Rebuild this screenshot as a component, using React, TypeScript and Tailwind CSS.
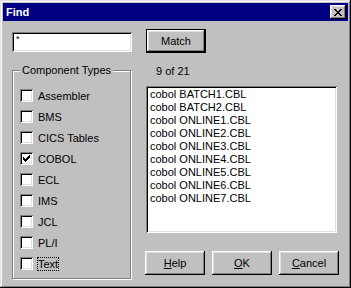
import React from 'react';

const font = "font-['Liberation_Sans',Arial,sans-serif]";

const raised =
  'shadow-[inset_-1px_-1px_#000,inset_1px_1px_#fff,inset_-2px_-2px_#808080,inset_2px_2px_#dfdfdf]';
const sunken =
  'shadow-[inset_1px_1px_#808080,inset_-1px_-1px_#fff,inset_2px_2px_#000,inset_-2px_-2px_#dfdfdf]';

// tiny pixel drawings (close "X" and the check mark)
const Pixels: React.FC<{ rows: string[] }> = ({ rows }) => (
  <svg width={rows[0].length} height={rows.length} shapeRendering="crispEdges" className="block">
    {rows.map((r, y) =>
      r.split('').map((c, x) => (c === 'X' ? <rect key={`${x}-${y}`} x={x} y={y} width={1} height={1} fill="#000" /> : null))
    )}
  </svg>
);

const closeX = ['XX....XX', '.XX..XX.', '..XXXX..', '...XX...', '..XXXX..', '.XX..XX.', 'XX....XX'];
const checkMark = ['......X', '.....XX', 'X...XXX', 'XX.XXX.', 'XXXXX..', '.XXX...', '..X....'];

const types = [
  { name: 'Assembler', checked: false },
  { name: 'BMS', checked: false },
  { name: 'CICS Tables', checked: false },
  { name: 'COBOL', checked: true },
  { name: 'ECL', checked: false },
  { name: 'IMS', checked: false },
  { name: 'JCL', checked: false },
  { name: 'PL/I', checked: false },
  { name: 'Text', checked: false, focused: true },
];

const files = [
  'cobol BATCH1.CBL',
  'cobol BATCH2.CBL',
  'cobol ONLINE1.CBL',
  'cobol ONLINE2.CBL',
  'cobol ONLINE3.CBL',
  'cobol ONLINE4.CBL',
  'cobol ONLINE5.CBL',
  'cobol ONLINE6.CBL',
  'cobol ONLINE7.CBL',
];

const Button: React.FC<{ children: React.ReactNode }> = ({ children }) => (
  <div className={`w-[60px] h-[24px] flex items-center justify-center bg-[#c0c0c0] ${raised}`}>{children}</div>
);

export default function App() {
  return (
    <div
      className={`w-[351px] h-[288px] bg-[#c0c0c0] p-[3px] flex flex-col text-[11px] leading-[13px] text-black ${font} shadow-[inset_-1px_-1px_#000,inset_1px_1px_#dfdfdf,inset_-2px_-2px_#808080,inset_2px_2px_#fff]`}
    >
      {/* Title bar */}
      <div className="h-[18px] bg-[#000080] flex items-center justify-between pl-[3px] pr-[2px] shrink-0">
        <span className="text-white font-bold text-[11px]">Find</span>
        <div className={`w-[16px] h-[14px] bg-[#c0c0c0] flex items-center justify-center ${raised}`}>
          <Pixels rows={closeX} />
        </div>
      </div>

      <div className="px-[9px] flex flex-col">
        {/* Search row */}
        <div className="flex mt-[8px]">
          <div className={`w-[120px] h-[20px] mt-[3px] bg-white pl-[4px] pt-[3px] text-[9px] leading-[9px] ${sunken}`}>*</div>
          <div className="ml-[14px] w-[60px] h-[24px] border border-black">
            <div className={`w-full h-full flex items-center justify-center bg-[#c0c0c0] ${raised}`}>Match</div>
          </div>
        </div>

        <div className="flex">
          {/* Component Types group */}
          <div className="w-[120px] pt-[17px]">
            <div className="relative w-[119px] h-[209px] border border-[#808080] shadow-[inset_1px_1px_#fff,1px_1px_#fff] pl-[7px] pt-[18px] flex flex-col gap-[8px]">
              <span className="absolute left-[7px] -top-[7px] bg-[#c0c0c0] px-[2px]">Component Types</span>
              {types.map((t) => (
                <div key={t.name} className="flex items-center h-[13px]">
                  <div className={`w-[13px] h-[13px] bg-white flex items-center justify-center shrink-0 ${sunken}`}>
                    {t.checked && <Pixels rows={checkMark} />}
                  </div>
                  <span
                    className={`ml-[4px] leading-[12px] border ${
                      t.focused ? 'border-dotted border-black' : 'border-transparent'
                    }`}
                  >
                    {t.name}
                  </span>
                </div>
              ))}
            </div>
          </div>

          {/* Results */}
          <div className="ml-[14px] flex flex-col">
            <div className="mt-[12px] pl-[11px]">9 of 21</div>
            <div className={`mt-[8px] ml-[1px] w-[191px] h-[147px] bg-white p-[2px] pl-[4px] ${sunken}`}>
              {files.map((f) => (
                <div key={f} className="leading-[13px] whitespace-nowrap">
                  {f}
                </div>
              ))}
            </div>
            <div className="mt-[18px] flex gap-[7px]">
              <Button>
                <span>
                  <u>H</u>elp
                </span>
              </Button>
              <Button>
                <span>
                  <u>O</u>K
                </span>
              </Button>
              <Button>
                <span>
                  <u>C</u>ancel
                </span>
              </Button>
            </div>
          </div>
        </div>
      </div>
    </div>
  );
}
